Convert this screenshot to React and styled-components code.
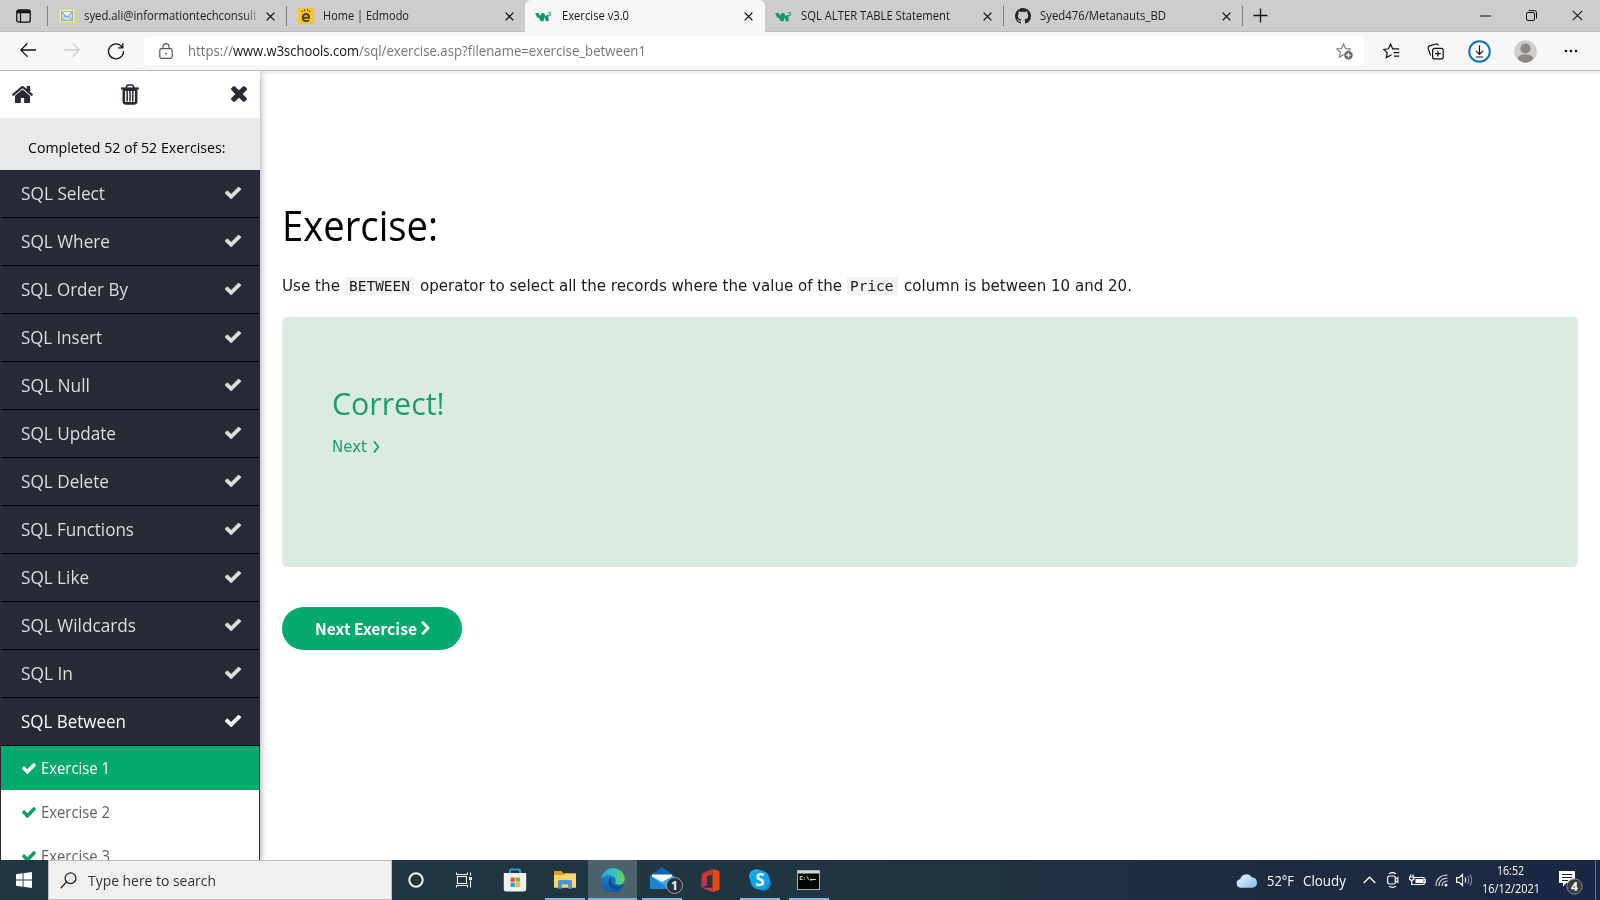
import React, { useLayoutEffect, useRef } from "react";
import styled, { createGlobalStyle } from "styled-components";

const Global = createGlobalStyle`
  *, *::before, *::after { box-sizing: border-box; }
  html, body { margin: 0; padding: 0; overflow: hidden; background: #fff; }
  body { font-family: "Open Sans", "Noto Sans", sans-serif; color: #000; }
  svg { display: block; flex: none; }
`;

/* Text condensed or widened so that it spans a given width. */
const Span = styled.span`
  display: inline-block;
  white-space: pre;
  transform-origin: 0 50%;
`;
function Fit({ w, children }) {
  const ref = useRef(null);
  useLayoutEffect(() => {
    const el = ref.current;
    el.style.transform = "none";
    const natural = el.getBoundingClientRect().width;
    el.style.transform = `scaleX(${w / natural})`;
    el.style.marginRight = w - natural + "px";
  }, [w, children]);
  return <Span ref={ref}>{children}</Span>;
}

const Screen = styled.div`
  width: 1600px;
  height: 900px;
  display: flex;
  flex-direction: column;
  overflow: hidden;
`;

/* ---------- browser chrome ---------- */
const TabStrip = styled.header`
  height: 32px;
  flex: none;
  display: flex;
  background: #cdcdcd;
  border-bottom: 1px solid #bcbcbc;
`;
const TabActions = styled.div`
  width: 47px;
  display: flex;
  align-items: center;
  justify-content: center;
`;
const Tab = styled.div`
  width: ${(p) => p.$w || 239}px;
  height: 32px;
  display: flex;
  align-items: center;
  padding: 0 ${(p) => p.$end || 11}px 0 10px;
  font-size: 12.4px;
  line-height: 30px;
  color: ${(p) => (p.$active ? "#111" : "#1c1c1c")};
  background: ${(p) => (p.$active ? "#f7f7f7" : "transparent")};
  border-radius: ${(p) => (p.$active ? "6px 6px 0 0" : "0")};
`;
const Separator = styled.i`
  width: 1px;
  height: 20px;
  margin-top: 6px;
  background: #7e7e7e;
`;
const Favicon = styled.span`
  width: 17px;
  display: flex;
  justify-content: center;
  margin-right: ${(p) => p.$gap || 9}px;
`;
const TabTitle = styled.span`
  flex: 1;
  min-width: 0;
  overflow: hidden;
  white-space: nowrap;
  ${(p) => p.$fade && "mask-image: linear-gradient(90deg, #000 88%, transparent 97%);"}
`;
const NewTab = styled.div`
  width: 34px;
  display: flex;
  align-items: center;
  justify-content: center;
`;
const WindowButtons = styled.div`
  margin-left: auto;
  display: flex;
  align-items: center;
  width: 138px;
`;
const WindowButton = styled.span`
  width: 46px;
  display: flex;
  justify-content: center;
`;

const Toolbar = styled.div`
  height: 39px;
  flex: none;
  display: flex;
  align-items: center;
  background: #f7f7f7;
  border-bottom: 1px solid #b9b9b9;
`;
const NavButtons = styled.div`
  width: 144px;
  display: flex;
  padding-left: 6px;
`;
const NavButton = styled.span`
  width: 44px;
  display: flex;
  justify-content: center;
`;
const AddressBar = styled.div`
  width: 1220px;
  height: 30px;
  display: flex;
  align-items: center;
  padding: 0 11px 0 15px;
  background: #fff;
  border-radius: 4px;
  box-shadow: 0 0 1px #ddd;
`;
const Url = styled.span`
  flex: 1;
  margin-left: 15px;
  font-size: 14px;
  line-height: 28px;
  color: #747474;
  b { font-weight: 400; color: #111; }
`;
const ToolbarIcons = styled.div`
  flex: 1;
  display: flex;
  padding-left: 5px;
`;
const ToolbarIcon = styled.span`
  width: ${(p) => p.$w || 45}px;
  display: flex;
  align-items: center;
  justify-content: center;
`;

/* ---------- page ---------- */
const Page = styled.div`
  flex: 1;
  min-height: 0;
  display: flex;
  background: #fff;
`;
const Sidebar = styled.nav`
  width: 260px;
  flex: none;
  z-index: 1;
  overflow: hidden;
  background: #fff;
  box-shadow: 0 2px 6px rgba(0, 0, 0, 0.3), 0 2px 10px rgba(0, 0, 0, 0.15);
  clip-path: inset(0 -14px 0 0);
`;
const SidebarHead = styled.div`
  height: 47px;
  display: grid;
  grid-template-columns: 109px 1fr auto;
  align-items: center;
  padding: 0 13px 1px 12px;
`;
const Progress = styled.div`
  height: 52px;
  padding: 7px 0 0 28px;
  line-height: 45px;
  font-size: 14.8px;
  background: #e7e9eb;
`;
const Chapters = styled.div`
  background: #282a35;
  padding: 0 1px;
`;
const Chapter = styled.div`
  height: 48px;
  display: flex;
  align-items: center;
  justify-content: space-between;
  padding: 0 18px 1px 20px;
  font-size: 17.8px;
  line-height: 46px;
  border-bottom: 1px solid #000;
  color: ${(p) => (p.$active ? "#fff" : "#dddddd")};
`;
const Exercise = styled.div`
  height: 44px;
  display: flex;
  align-items: center;
  gap: 5px;
  padding-left: 21px;
  padding-bottom: 0;
  font-size: 15.6px;
  line-height: 42px;
  color: ${(p) => (p.$active ? "#fff" : "#616161")};
  background: ${(p) => (p.$active ? "#04aa6d" : "#fff")};
`;

const Content = styled.main`
  flex: 1;
  padding: 125px 22px 0;
  border-top: 3px solid #f1f1f1;
`;
const Title = styled.h1`
  margin: 0;
  height: 60px;
  line-height: 51px;
  font-size: 42px;
  font-weight: 400;
`;
const Task = styled.p`
  margin: 15px 0 19px;
  height: 24px;
  display: flex;
  align-items: center;
  font-family: "DejaVu Sans", Verdana, sans-serif;
  font-size: 15px;
  line-height: 24px;
  color: #1a1a1a;
`;
const Code = styled.code`
  height: 18px;
  margin: 0 6px 0 5px;
  padding: 0 4px 0 3.500px;
  line-height: 17px;
  font-family: "DejaVu Sans Mono", monospace;
  font-size: 14.6px;
  background: #f3f3f3;
`;
const Result = styled.section`
  height: 250px;
  padding: 61px 50px;
  border-radius: 5px;
  background: #d9ecdf;
  color: #1a9f6c;
`;
const ResultTitle = styled.h2`
  margin: 0;
  font-size: 31.500px;
  line-height: 50px;
  font-weight: 400;
`;
const NextLink = styled.a`
  display: flex;
  align-items: center;
  gap: 6px;
  height: 38px;
  font-family: "DejaVu Sans", Verdana, sans-serif;
  font-size: 15px;
`;
const NextButton = styled.button`
  display: flex;
  align-items: center;
  gap: 4px;
  width: 180px;
  height: 43px;
  margin-top: 40px;
  padding: 0 0 1px 33px;
  border: 0;
  border-radius: 22px;
  background: #04aa6d;
  color: #fff;
  font: 700 16px/41px "Noto Sans CJK SC", "Open Sans", sans-serif;
`;

/* ---------- taskbar ---------- */
const Taskbar = styled.footer`
  height: 40px;
  flex: none;
  z-index: 2;
  display: flex;
  color: #fff;
  background: linear-gradient(90deg, #203640 0%, #20353f 55%, #1d2b41 80%, #1a2744 100%);
`;
const Start = styled.div`
  width: 48px;
  display: flex;
  align-items: center;
  justify-content: center;
`;
const Search = styled.div`
  width: 344px;
  display: flex;
  align-items: center;
  gap: 11px;
  padding-left: 11px;
  font-size: 15px;
  color: #333;
  background: #f1f1f1;
  border: 1px solid #bdbdbd;
`;
const TaskItem = styled.div`
  width: ${(p) => p.$w || 49}px;
  display: flex;
  align-items: center;
  justify-content: center;
  background: ${(p) => (p.$active ? "#4d626b" : "transparent")};
  box-shadow: ${(p) => (p.$active ? "inset 0 -2px #76b9ed" : "none")};
  background-image: ${(p) => (p.$open ? "linear-gradient(#76b9ed, #76b9ed)" : "none")};
  background-size: 40px 2px;
  background-position: center bottom;
  background-repeat: no-repeat;
`;
const Tray = styled.div`
  margin-left: auto;
  display: flex;
  align-items: center;
`;
const TrayIcon = styled.span`
  width: ${(p) => p.$w || 24}px;
  display: flex;
  justify-content: center;
`;
const Weather = styled.div`
  display: flex;
  align-items: center;
  font-size: 13.8px;
  gap: 9px;
  margin-right: 11px;
`;
const Clock = styled.div`
  width: 69px;
  display: flex;
  flex-direction: column;
  align-items: center;
  font-size: 12px;
  line-height: 18px;
`;
const ShowDesktop = styled.i`
  width: 5px;
  height: 40px;
  border-left: 1px solid #6d7688;
`;

/* ---------- icons ---------- */
const CHECK =
  "M1671 566q0 40-28 68l-724 724-136 136q-28 28-68 28t-68-28l-136-136-362-362q-28-28-28-68t28-68l136-136q28-28 68-28t68 28l294 295 656-657q28-28 68-28t68 28l136 136q28 28 28 68z";
const HOME =
  "M1472 992v480q0 26-19 45t-45 19h-384v-384h-256v384h-384q-26 0-45-19t-19-45v-480q0-1 .5-3t.5-3l575-474 575 474q1 2 1 6zm223-69l-62 74q-8 9-21 11h-3q-13 0-21-7l-692-577-692 577q-12 8-24 7-13-2-21-11l-62-74q-8-10-7-23.5t11-21.5l719-599q32-26 76-26t76 26l244 204v-195q0-14 9-23t23-9h192q14 0 23 9t9 23v408l219 182q10 8 11 21.5t-7 23.5z";
const TIMES =
  "M1490 1322q0 40-28 68l-136 136q-28 28-68 28t-68-28l-294-294-294 294q-28 28-68 28t-68-28l-136-136q-28-28-28-68t28-68l294-294-294-294q-28-28-28-68t28-68l136-136q28-28 68-28t68 28l294 294 294-294q28-28 68-28t68 28l136 136q28 28 28 68t-28 68l-294 294 294 294q28 28 28 68z";
const Glyph = ({ d, box, w, h, fill = "currentColor" }) => (
  <svg width={w} height={h} viewBox={box} preserveAspectRatio="none" fill={fill}><path d={d} /></svg>
);
const Check = ({ w = 16, h = 12, fill }) => <Glyph d={CHECK} box="121 342 1550 1180" w={w} h={h} fill={fill} />;
const Trash = () => (
  <svg width="18" height="21" viewBox="0 0 18 21" fill="none" stroke="#282a35">
    <path d="M5 4 6 1.6q.3-.6 1-.6h4q.7 0 1 .6L13 4" strokeWidth="1.6" />
    <path d="M0 4.4h18" strokeWidth="2" />
    <path d="M2.8 5v12.6q0 1.800 1.800 1.800h8.800q1.800 0 1.800-1.800V5" strokeWidth="2.500" />
    <path d="M6.200 7v10.500M9 7v10.500M11.800 7v10.500" strokeWidth="1.500" />
    <path d="M4 19h10M3 5.800h12" strokeWidth="2.200" />
  </svg>
);
const Chevron = ({ w = 7, h = 13, sw = 1.8 }) => (
  <svg width={w} height={h} viewBox="0 0 7 13" preserveAspectRatio="none" fill="none" stroke="currentColor" strokeWidth={sw}>
    <path d="M1 .6 5.4 6.5 1 12.400" />
  </svg>
);
const Close = ({ s = 9, sw = 1.5 }) => (
  <svg width={s} height={s} viewBox="0 0 10 10" stroke="#111" strokeWidth={sw}><path d="M.7.7l8.600 8.600M9.300.7.7 9.300" /></svg>
);
const TabPanel = () => (
  <svg width="15" height="14" viewBox="0 0 15 14" fill="none" stroke="#111" strokeWidth="1.300">
    <rect x=".8" y=".8" width="13.400" height="12.400" rx="2" />
    <path d="M1 2h13M1 3.400h13" strokeWidth="1.500" /><path d="M4.500 4v9" />
  </svg>
);
const MailFav = () => (
  <svg width="16" height="14" viewBox="0 0 16 14">
    <rect x=".7" y=".7" width="14.600" height="12.600" fill="#fbfbe2" stroke="#d7e35a" strokeWidth="1.400" />
    <rect x="2.400" y="2.600" width="11.200" height="9" fill="#c5dcf2" stroke="#7ea0c4" strokeWidth=".8" />
    <path d="M2.500 2.700 8 8l5.500-5.300" fill="#eef6fd" stroke="#6f93ba" /><path d="m2.500 11.500 4-4.600m3 0 4 4.600" fill="none" stroke="#7ea0c4" strokeWidth=".8" />
  </svg>
);
const EdmodoFav = () => (
  <svg width="16" height="16" viewBox="0 0 16 16">
    <rect width="16" height="16" rx="1" fill="#fdc62f" />
    <path d="M4.800 9.800h6.400Q11.200 6 8 6 4.700 6.200 4.700 9.700q.2 3.300 3.500 3.400 1.800 0 2.900-1" fill="none" stroke="#4f4225" strokeWidth="1.900" />
    <path d="M4.600 3.800l-.8-1.200M6.700 3.200 6.300 1.300M9.200 3.200l.4-1.900M11.200 3.900l.9-1.200" stroke="#4f4225" strokeWidth="1.100" />
  </svg>
);
const SchoolFavText = styled.text`
  font: 700 6px "Open Sans", sans-serif;
`;
const SchoolFav = () => (
  <svg width="17" height="14" viewBox="0 0 17 14">
    <path d="M.2 4h3.600l1 2.800L7 4h2.200l1.200 3L13.300 5.200l.4 7h-2.600L9.300 8.300 8.600 12.200H5.800L3.600 8.600 2.300 9z" fill="#109a67" />
    <SchoolFavText x="12.800" y="6.500" fill="#109a67">3</SchoolFavText>
  </svg>
);
const GithubFav = () => (
  <svg width="16" height="16" viewBox="0 0 16 16" fill="#24292f">
    <path d="M8 0C3.580 0 0 3.580 0 8c0 3.540 2.290 6.530 5.470 7.590.4.070.55-.17.55-.38 0-.19-.01-.82-.01-1.490-2.010.37-2.530-.49-2.690-.94-.09-.23-.48-.94-.82-1.130-.28-.15-.68-.52-.01-.53.63-.01 1.080.58 1.230.82.72 1.210 1.870.87 2.330.66.07-.52.28-.87.51-1.070-1.780-.2-3.640-.89-3.640-3.950 0-.87.31-1.590.82-2.150-.08-.2-.36-1.020.08-2.120 0 0 .67-.21 2.200.82.64-.18 1.320-.27 2-.27s1.360.09 2 .27c1.530-1.040 2.200-.82 2.200-.82.44 1.100.16 1.920.08 2.120.51.56.82 1.270.82 2.150 0 3.070-1.870 3.750-3.650 3.950.29.25.54.73.54 1.480 0 1.070-.01 1.930-.01 2.200 0 .21.15.46.55.38A8.010 8.010 0 0 0 16 8c0-4.420-3.580-8-8-8z" />
  </svg>
);
const Arrow = ({ color, flip }) => (
  <svg width="17" height="15" viewBox="0 0 17 15" fill="none" stroke={color} strokeWidth="1.300">
    <path d={flip ? "M0 8h15M8.500 1.300l6.700 6.700-6.700 6.700" : "M16 8H1M7.500 1.300.8 8l6.700 6.700"} />
  </svg>
);
const Reload = () => (
  <svg width="18" height="18" viewBox="0 0 18 18" fill="none" stroke="#111" strokeWidth="1.300">
    <path d="M15.500 5.600A7.500 7.500 0 1 0 16.500 9M15.800 1.200v4.600h-4.600" />
  </svg>
);
const Lock = () => (
  <svg width="14" height="17" viewBox="0 0 14 17" fill="none" stroke="#555" strokeWidth="1.200">
    <rect x=".8" y="5.600" width="12.400" height="9.800" rx="1.800" /><path d="M4 5.400V3.600a3 3 0 0 1 6 0v1.800" /><circle cx="7" cy="10.700" r=".9" fill="#555" stroke="none" />
  </svg>
);
const STAR = "M7.500 1l2 4.500 4.800.5-3.600 3.300 1 4.900-4.200-2.500-4.200 2.500 1-4.900L.7 6l4.800-.5z";
const StarAdd = () => (
  <svg width="17" height="17" viewBox="0 0 17 17" fill="none" stroke="#777" strokeWidth="1.100">
    <path d={STAR} /><circle cx="12.400" cy="12.200" r="4.600" fill="#666" stroke="#fff" strokeWidth=".6" /><path d="M12.400 9.800v4.800M10 12.200h4.800" stroke="#fff" strokeWidth="1.300" />
  </svg>
);
const Favorites = () => (
  <svg width="17" height="16" viewBox="0 0 17 16" fill="none" stroke="#111" strokeWidth="1.200">
    <path d="M8.600 11.800 3.300 14.600l1-4.700L.8 6.500l4.700-.7L7.600 1l2 4.800h6.600M10.600 9.700h5.600M11 13.200h5.200" />
  </svg>
);
const Collections = () => (
  <svg width="17" height="17" viewBox="0 0 17 17" fill="none" stroke="#111" strokeWidth="1.200">
    <rect x="5.600" y="5.300" width="10.600" height="10.600" rx="2" /><path d="M10.900 7.700v5.800M8 10.600h5.800M3.700 12.500 1.200 5.600q-.5-2 1.300-2.700L9 1q1.800-.3 2.400 1.500" />
  </svg>
);
const Download = () => (
  <svg width="23" height="23" viewBox="0 0 23 23" fill="none">
    <circle cx="11.500" cy="11.500" r="10.300" fill="#fff" stroke="#1272c0" strokeWidth="2" /><path d="M11.500 5.500v8.700M8 10.800l3.500 3.500 3.500-3.500M8 17h7" stroke="#111" strokeWidth="1.200" />
  </svg>
);
const Avatar = () => (
  <svg width="23" height="23" viewBox="0 0 23 23">
    <circle cx="11.500" cy="11.500" r="11.300" fill="#cfcdcb" /><circle cx="11.500" cy="8.400" r="5" fill="#8b8886" /><path d="M3.700 18.500q1-4 7.800-4t7.800 4A11.300 11.300 0 0 1 11.500 22.700a11.300 11.300 0 0 1-7.800-4.200z" fill="#8b8886" />
  </svg>
);
const Dots = () => (
  <svg width="14" height="4" viewBox="0 0 14 4" fill="#111"><circle cx="2" cy="2" r="1.300" /><circle cx="7" cy="2" r="1.300" /><circle cx="12" cy="2" r="1.300" /></svg>
);
const Windows = () => (
  <svg width="16" height="16" viewBox="0 0 16 16" fill="#fff"><path d="M0 2.200 6.600 1.300v6.200H0zM7.500 1.200 16 0v7.500H7.500zM0 8.400h6.600v6.300L0 13.800zM7.500 8.400H16V16l-8.500-1.200z" /></svg>
);
const Magnifier = () => (
  <svg width="17" height="17" viewBox="0 0 17 17" fill="none" stroke="#222" strokeWidth="1.300"><circle cx="10.500" cy="6.200" r="5.400" /><path d="M6.600 10 .6 16.300" /></svg>
);
const Cortana = () => (
  <svg width="16" height="16" viewBox="0 0 16 16"><circle cx="8" cy="8" r="6.700" fill="none" stroke="#f2f2f2" strokeWidth="2" /></svg>
);
const TaskView = () => (
  <svg width="17" height="16" viewBox="0 0 17 16" fill="none" stroke="#eee" strokeWidth="1.100">
    <rect x="1.500" y="4.500" width="9" height="7" /><path d="M.5.500v2h11v-2M.5 15.500v-2h11v2M14.500.5v3M14.500 8.500v7" /><path d="M13 5h3v3h-3z" fill="#eee" stroke="none" />
  </svg>
);
const Store = () => (
  <svg width="24" height="24" viewBox="0 0 24 24">
    <path d="M7 6V2.800Q7 1.500 8.300 1.500h7.400Q17 1.500 17 2.800V6" fill="none" stroke="#2a9fd8" strokeWidth="2" />
    <path d="M.8 5h22.400v16q0 2.500-2.500 2.500H3.300Q.8 23.500.8 21z" fill="#f1f1f3" />
    <path d="M7.500 9.500h4.300v4.300H7.500z" fill="#e8502a" /><path d="M12.600 9.500h4.300v4.300h-4.300z" fill="#77b62b" /><path d="M7.500 14.600h4.300v4.300H7.500z" fill="#1d9fe0" /><path d="M12.600 14.600h4.300v4.300h-4.300z" fill="#f7b518" />
  </svg>
);
const Folder = () => (
  <svg width="22" height="20" viewBox="0 0 22 20">
    <path d="M0 1.500Q0 1 .6 1h7l2 2.500H21q1 0 1 1V7H0z" fill="#d9a127" /><path d="M0 5h9l2-1.500h11v14.300H0z" fill="#fcd667" />
    <path d="M4 18.800v-7.500q0-1.200 1.200-1.200h11.600q1.200 0 1.200 1.200v7.500h-3.800v-4.400H7.800v4.400z" fill="#4a95d2" />
  </svg>
);
const Edge = () => (
  <svg width="24" height="24" viewBox="0 0 24 24">
    <defs>
      <linearGradient id="edgeTop" x1="0" x2="1"><stop offset="0" stopColor="#2aa7df" /><stop offset=".5" stopColor="#30c3c4" /><stop offset="1" stopColor="#67d954" /></linearGradient>
      <linearGradient id="edgeLow" x1="0" x2="0" y2="1"><stop offset="0" stopColor="#1b93df" /><stop offset="1" stopColor="#1156a4" /></linearGradient>
    </defs>
    <path d="M.3 12C.3 5.500 5.500.3 12 .3S20 8 18 13l4.300 6A11.700 11.700 0 0 1 .3 12z" fill="url(#edgeLow)" />
    <path d="M.4 10.800C1.200 4.500 6 .3 12 .3c7 0 11.700 5.200 11.700 10.400 0 3.500-2.600 5.800-5.700 5.800-2.400 0-4.200-.8-3.700-2.200 1.200-1.900.7-5.600-3.300-6.600C6.600 6.500 2 7.600.4 10.800z" fill="url(#edgeTop)" />
    <path d="M9.200 9.700c-4.500 4.600.3 11.700 6.300 12 3-.6 5.700-2.700 6.800-4.500-4.800 2.500-11.700 1.300-12.200-3.900-.1-1.500.5-2.700 1.200-3.500z" fill="#15498a" />
  </svg>
);
const TrayBadge = styled.text`
  font: 700 ${(p) => p.$s || 10}px "Open Sans", sans-serif;
  fill: #fff;
  text-anchor: middle;
`;
const Mail = () => (
  <svg width="34" height="28" viewBox="0 0 34 28">
    <path d="M1 8.500 13 0l12 8.500v4H1z" fill="#1265ac" /><path d="M3 7.500h20V15H3z" fill="#f3f8fb" /><path d="M1 8.500 13 15l12-6.500V22H1z" fill="#36a9ea" /><path d="M1 8.500 20 22H1z" fill="#1c86d1" />
    <circle cx="25.500" cy="18.500" r="8" fill="#28343b" stroke="#9da3a7" /><TrayBadge x="25.500" y="23" $s={12}>1</TrayBadge>
  </svg>
);
const MailSlot = styled.span`
  padding: 2px 0 0 8px;
`;
const Office = () => (
  <svg width="19" height="23" viewBox="0 0 19 23">
    <path d="M11.500 0 18.500 2v19l-7 2z" fill="#e8490f" />
    <path d="M11.500 0v5.500L6 7.200v9L.6 18.500V6.200q0-1.600 1.600-2.400z" fill="#c9382e" />
    <path d="M.6 18.500 6 16.200V12L.6 10z" fill="#b93558" />
    <path d="M1 18.800h10.500V23z" fill="#d2394b" />
  </svg>
);
const SkypeS = styled.text`
  font: 700 17px "Open Sans", sans-serif;
  fill: #fff;
  text-anchor: middle;
`;
const Skype = () => (
  <svg width="22" height="22" viewBox="0 0 22 22">
    <circle cx="7.500" cy="7.500" r="7.300" fill="#19b5f1" /><circle cx="14.500" cy="14.500" r="7.300" fill="#0e87dc" /><circle cx="11" cy="11" r="9.800" fill="#0ea3ea" /><SkypeS x="11" y="17">S</SkypeS>
  </svg>
);
const PromptText = styled.text`
  font: 700 5.500px "Liberation Mono", monospace;
  fill: #fff;
`;
const Terminal = () => (
  <svg width="23" height="20" viewBox="0 0 23 20">
    <rect x=".5" y=".5" width="22" height="19" fill="#050505" stroke="#a9adb0" /><path d="M1 1h21v2.500H1z" fill="#d5d8da" /><PromptText x="2.500" y="9.500">C:\_</PromptText><path d="M13 9.500h6" stroke="#ccc" />
  </svg>
);
const Cloud = () => (
  <svg width="22" height="15" viewBox="0 0 22 15">
    <defs><linearGradient id="cloud" x1="0" y1="0" x2="1" y2="1"><stop offset="0" stopColor="#f3fbff" /><stop offset="1" stopColor="#84b8ea" /></linearGradient></defs>
    <path d="M4.500 14.700a4.300 4.300 0 0 1-.4-8.500A6.600 6.600 0 0 1 16 4.400 5.200 5.200 0 0 1 16.800 14.700z" fill="url(#cloud)" />
  </svg>
);
const Up = () => (
  <svg width="13" height="8" viewBox="0 0 13 8" fill="none" stroke="#fff" strokeWidth="1.300"><path d="M.7 7 6.500 1.200 12.300 7" /></svg>
);
const Camera = () => (
  <svg width="12" height="16" viewBox="0 0 12 16" fill="none" stroke="#fff" strokeWidth="1.200">
    <rect x=".7" y="4" width="7.600" height="8" rx="1.500" /><path d="M8.500 7 10.800 5.500v5L8.500 9M2 1.700Q5.500-.3 9 1.700M2 14.300q3.500 2 7 0" />
  </svg>
);
const Battery = () => (
  <svg width="17" height="13" viewBox="0 0 17 13" fill="none" stroke="#fff" strokeWidth="1.200">
    <path d="M5 3.500h10v7H5.500M15.500 5.500h1v3h-1M1.500.5v2.500M4 .5v2.500M.6 3h4.200v2.300L2.700 6.500.6 5.300zM2.700 6.500v4h3" /><path d="M6.500 5h7.500v4H6.500z" fill="#fff" stroke="none" />
  </svg>
);
const Wifi = () => (
  <svg width="13" height="13" viewBox="0 0 13 13" fill="none" stroke="#d4d9e0" strokeWidth="1.200">
    <path d="M1 12Q1 1.500 12.500 1M4 12Q4 4.500 12.500 4M7 12Q7 7.500 12.500 7" /><circle cx="11" cy="11" r="1.500" fill="#fff" stroke="none" />
  </svg>
);
const Volume = () => (
  <svg width="17" height="14" viewBox="0 0 17 14" fill="none" stroke="#fff" strokeWidth="1.200">
    <path d="M.7 4.700h2.500L6.500 1.500v11L3.200 9.300H.7zM9 4.500q1.600 2.500 0 5" /><path d="M11.500 3q2.500 4 0 8M14 1.500q3.300 5.500 0 11" stroke="#8088a0" />
  </svg>
);
const Notifications = () => (
  <svg width="25" height="26" viewBox="0 0 25 26">
    <path d="M1 1h16v12H8.500L5 16.500V13H1z" fill="#fff" /><path d="M4 4.500h10M4 7.500h10M4 10.500h6" stroke="#1a2744" /><circle cx="16.500" cy="16.500" r="7.600" fill="#333a42" stroke="#868c96" /><TrayBadge x="16.500" y="21" $s={12}>4</TrayBadge>
  </svg>
);
const NotificationSlot = styled(TrayIcon)`
  width: 50px;
  padding-top: 5px;
`;

/* ---------- data ---------- */
const tabs = [
  { icon: <MailFav />, title: "syed.ali@informationtechconsult", w: 173, fade: true, sep: true, size: 238 },
  { icon: <EdmodoFav />, title: "Home | Edmodo", w: 86, size: 238 },
  { icon: <SchoolFav />, title: "Exercise v3.0", w: 67, active: true, size: 240, end: 12, gap: 10 },
  { icon: <SchoolFav />, title: "SQL ALTER TABLE Statement", w: 149, sep: true, size: 238 },
  { icon: <GithubFav />, title: "Syed476/Metanauts_BD", w: 126, sep: true, size: 238 },
];
const chapters = [
  ["SQL Select", 84], ["SQL Where", 89], ["SQL Order By", 107], ["SQL Insert", 81],
  ["SQL Null", 69], ["SQL Update", 95], ["SQL Delete", 88], ["SQL Functions", 113],
  ["SQL Like", 68], ["SQL Wildcards", 115], ["SQL In", 52], ["SQL Between", 105],
];

export default function App() {
  return (
    <Screen>
      <Global />
      <TabStrip>
        <TabActions><TabPanel /></TabActions>
        <Separator />
        {tabs.map((t) => (
          <React.Fragment key={t.title}>
            <Tab $active={t.active} $w={t.size} $end={t.end}>
              <Favicon $gap={t.gap}>{t.icon}</Favicon>
              <TabTitle $fade={t.fade}><Fit w={t.w}>{t.title}</Fit></TabTitle>
              <Close />
            </Tab>
            {t.sep && <Separator />}
          </React.Fragment>
        ))}
        <NewTab>
          <svg width="15" height="15" viewBox="0 0 15 15" stroke="#111" strokeWidth="1.300"><path d="M7.500.5v14M.5 7.500h14" /></svg>
        </NewTab>
        <WindowButtons>
          <WindowButton><svg width="11" height="2" viewBox="0 0 11 2" fill="#111"><path d="M0 .5h11v1H0z" /></svg></WindowButton>
          <WindowButton>
            <svg width="11" height="11" viewBox="0 0 11 11" fill="none" stroke="#111"><rect x=".5" y="2.500" width="8" height="8" rx="1.500" /><path d="M2.500.6h6q2 0 2 2v6" /></svg>
          </WindowButton>
          <WindowButton><Close s={11} sw={1} /></WindowButton>
        </WindowButtons>
      </TabStrip>
      <Toolbar>
        <NavButtons>
          <NavButton><Arrow color="#111" /></NavButton>
          <NavButton><Arrow color="#cfcfcf" flip /></NavButton>
          <NavButton><Reload /></NavButton>
        </NavButtons>
        <AddressBar>
          <Lock />
          <Url><Fit w={45}>https://</Fit><b><Fit w={126}>www.w3schools.com</Fit></b><Fit w={287}>/sql/exercise.asp?filename=exercise_between1</Fit></Url>
          <StarAdd />
        </AddressBar>
        <ToolbarIcons>
          <ToolbarIcon><Favorites /></ToolbarIcon>
          <ToolbarIcon $w={43}><Collections /></ToolbarIcon>
          <ToolbarIcon><Download /></ToolbarIcon>
          <ToolbarIcon $w={46}><Avatar /></ToolbarIcon>
          <ToolbarIcon $w={46}><Dots /></ToolbarIcon>
        </ToolbarIcons>
      </Toolbar>
      <Page>
        <Sidebar>
          <SidebarHead>
            <Glyph d={HOME} box="89 253 1614 1283" w={21} h={17} fill="#282a35" />
            <Trash />
            <Glyph d={TIMES} box="302 366 1188 1188" w={16} h={16} fill="#282a35" />
          </SidebarHead>
          <Progress><Fit w={197.5}>Completed 52 of 52 Exercises:</Fit></Progress>
          <Chapters>
            {chapters.map(([name, w]) => (
              <Chapter key={name} $active={name === "SQL Between"}><Fit w={w}>{name}</Fit><Check /></Chapter>
            ))}
            <Exercise $active><Check w={14} h={11} /><Fit w={69}>Exercise 1</Fit></Exercise>
            <Exercise><Check w={14} h={11} fill="#159a69" /><Fit w={69}>Exercise 2</Fit></Exercise>
            <Exercise><Check w={14} h={11} fill="#159a69" /><Fit w={69}>Exercise 3</Fit></Exercise>
          </Chapters>
        </Sidebar>
        <Content>
          <Title><Fit w={156}>Exercise:</Fit></Title>
          <Task>
            <Fit w={58}>Use the</Fit><Code><Fit w={61}>BETWEEN</Fit></Code>
            <Fit w={422}>operator to select all the records where the value of the</Fit>
            <Code><Fit w={43.5}>Price</Fit></Code><Fit w={228}>column is between 10 and 20.</Fit>
          </Task>
          <Result>
            <ResultTitle><Fit w={112.5}>Correct!</Fit></ResultTitle>
            <NextLink><Fit w={35}>Next</Fit><Chevron h={12} /></NextLink>
          </Result>
          <NextButton><Fit w={102}>Next Exercise</Fit><Chevron w={9} h={14} sw={2.3} /></NextButton>
        </Content>
      </Page>
      <Taskbar>
        <Start><Windows /></Start>
        <Search><Magnifier /><Fit w={128}>Type here to search</Fit></Search>
        <TaskItem $w={48}><Cortana /></TaskItem>
        <TaskItem $w={48}><TaskView /></TaskItem>
        <TaskItem $w={53}><Store /></TaskItem>
        <TaskItem $w={47} $open><Folder /></TaskItem>
        <TaskItem $active><Edge /></TaskItem>
        <TaskItem $open><MailSlot><Mail /></MailSlot></TaskItem>
        <TaskItem><Office /></TaskItem>
        <TaskItem $open><Skype /></TaskItem>
        <TaskItem $open><Terminal /></TaskItem>
        <Tray>
          <Weather><Cloud /><Fit w={27}>52°F</Fit><Fit w={43}>Cloudy</Fit></Weather>
          <TrayIcon><Up /></TrayIcon>
          <TrayIcon><Camera /></TrayIcon>
          <TrayIcon><Battery /></TrayIcon>
          <TrayIcon><Wifi /></TrayIcon>
          <TrayIcon $w={23}><Volume /></TrayIcon>
          <Clock><div><Fit w={27}>16:52</Fit></div><div><Fit w={58}>16/12/2021</Fit></div></Clock>
          <NotificationSlot><Notifications /></NotificationSlot>
          <ShowDesktop />
        </Tray>
      </Taskbar>
    </Screen>
  );
}
